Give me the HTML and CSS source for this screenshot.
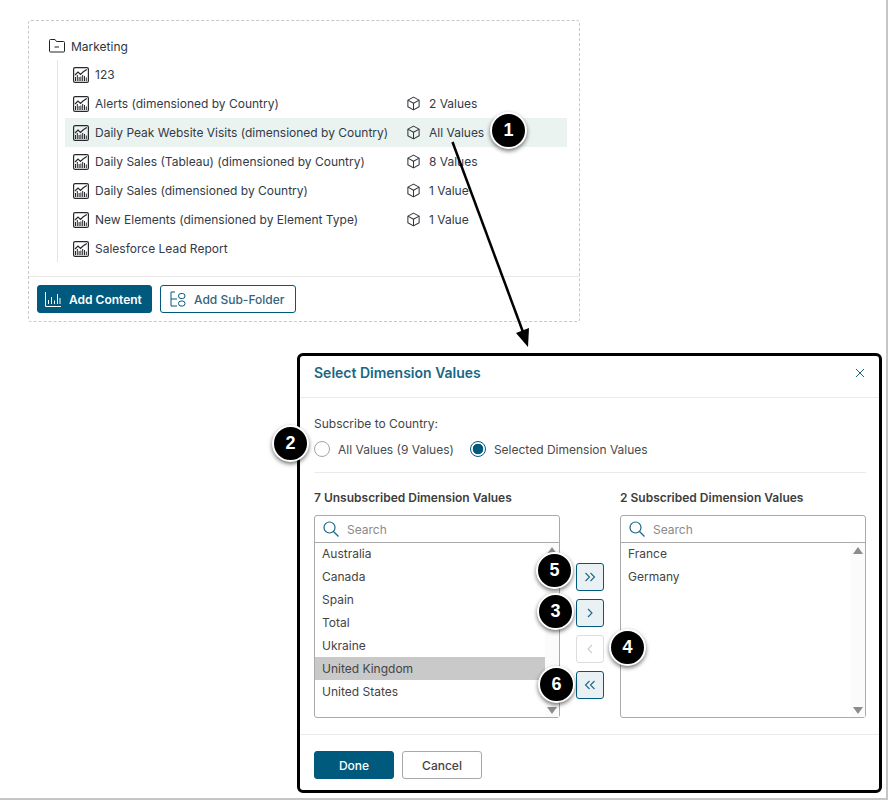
FILE: index.html
```html
<!DOCTYPE html>
<html lang="en">
<head>
<meta charset="utf-8">
<title>Select Dimension Values</title>
<link rel="stylesheet" href="styles.css">
</head>
<body>
<svg width="0" height="0" class="defs">
  <symbol id="chart" viewBox="0 0 16 16">
    <rect x=".6" y=".6" width="14.800" height="14.800" rx="1.500" fill="none" stroke="currentColor" stroke-width="1.200"/>
    <path d="M2 8 5 5 7.500 7.500 10 5 13.800 2.600" fill="none" stroke="currentColor" stroke-width="1.200"/>
    <path d="M2.500 14V10M4.300 14V8M6.100 14V10M7.900 14V9.500M9.700 14V8M11.500 14V9M13.300 14V10.500" fill="none" stroke="currentColor" stroke-width="1"/>
  </symbol>
  <symbol id="cube" viewBox="0 0 16 16">
    <path d="M8 1.200 14 4.400V11.400L8 14.800 2 11.400V4.400ZM2 4.400 8 7.800 14 4.400M8 7.800V14.800" fill="none" stroke="currentColor" stroke-width="1.100" stroke-linejoin="round"/>
  </symbol>
</svg>

<main class="frame">
  <section class="card">
    <div class="tree">
      <div class="folder">
        <svg class="folder-icon" viewBox="0 0 16 14" width="16" height="14"><path d="M.5 12V1.500a1 1 0 0 1 1-1H6L7.500 2.500H14.500a1 1 0 0 1 1 1V12a1 1 0 0 1-1 1H1.500a1 1 0 0 1-1-1ZM5.500 8H10" fill="none" stroke="currentColor"/></svg>
        <span>Marketing</span>
      </div>
      <ul class="items">
        <li class="item"><span class="name"><svg class="ic16"><use href="#chart"/></svg>123</span></li>
        <li class="item"><span class="name"><svg class="ic16"><use href="#chart"/></svg>Alerts (dimensioned by Country)</span><span class="val"><svg class="ic15"><use href="#cube"/></svg>2 Values</span></li>
        <li class="item active"><span class="name"><svg class="ic16"><use href="#chart"/></svg>Daily Peak Website Visits (dimensioned by Country)</span><span class="val"><svg class="ic15"><use href="#cube"/></svg>All Values</span></li>
        <li class="item"><span class="name"><svg class="ic16"><use href="#chart"/></svg>Daily Sales (Tableau) (dimensioned by Country)</span><span class="val"><svg class="ic15"><use href="#cube"/></svg>8 Values</span></li>
        <li class="item"><span class="name"><svg class="ic16"><use href="#chart"/></svg>Daily Sales (dimensioned by Country)</span><span class="val"><svg class="ic15"><use href="#cube"/></svg>1 Value</span></li>
        <li class="item"><span class="name"><svg class="ic16"><use href="#chart"/></svg>New Elements (dimensioned by Element Type)</span><span class="val"><svg class="ic15"><use href="#cube"/></svg>1 Value</span></li>
        <li class="item"><span class="name"><svg class="ic16"><use href="#chart"/></svg>Salesforce Lead Report</span></li>
      </ul>
    </div>
    <div class="card-foot">
      <button class="btn primary add-content">
        <svg viewBox="0 0 16 16" width="16" height="16"><path d="M.5 1V15.500H16M3.500 13V9M6.500 13V6M9.500 13V9.500M12.500 13V3M15 13V7" fill="none" stroke="currentColor"/></svg>
        Add Content
      </button>
      <button class="btn outline add-sub">
        <svg viewBox="0 0 16 16" width="16" height="16"><path d="M5 1H1V15H7M1 8H7" fill="none" stroke="currentColor"/><rect x="8.500" y="2.500" width="6.500" height="5" rx="2.500" fill="none" stroke="currentColor"/><rect x="8.500" y="10" width="6.500" height="5" rx="2.500" fill="none" stroke="currentColor"/></svg>
        Add Sub-Folder
      </button>
    </div>
  </section>

  <section class="dialog">
    <header class="dlg-head">
      <h2>Select Dimension Values</h2>
      <svg class="close" viewBox="0 0 10 10" width="10" height="10"><path d="M1 1 9 9M9 1 1 9" fill="none" stroke="currentColor" stroke-width="1"/></svg>
    </header>
    <div class="dlg-body">
      <div class="subscribe">
        <p class="sub-label">Subscribe to Country:</p>
        <div class="radios">
          <label class="radio"><span class="dot"></span>All Values (9 Values)</label>
          <label class="radio"><span class="dot on"></span>Selected Dimension Values</label>
        </div>
      </div>
      <div class="picker">
        <div class="col">
          <h3>7 Unsubscribed Dimension Values</h3>
          <div class="box">
            <div class="search">
              <svg viewBox="0 0 16 16" width="16" height="16"><circle cx="6.500" cy="6.500" r="5.500" fill="none" stroke="currentColor" stroke-width="1.200"/><path d="M10.500 10.500 15.500 15.500" stroke="currentColor" stroke-width="1.200"/></svg>
              <span>Search</span>
            </div>
            <div class="list">
              <ul class="opts">
                <li>Australia</li><li>Canada</li><li>Spain</li><li>Total</li><li>Ukraine</li><li class="sel">United Kingdom</li><li>United States</li>
              </ul>
              <div class="scroll"><i class="up"></i><i class="down"></i></div>
            </div>
          </div>
        </div>
        <div class="moves">
          <button class="mv"><svg viewBox="0 0 12 10" width="12" height="10"><path d="M1.500 1 5.500 5 1.500 9M6.500 1 10.500 5 6.500 9" fill="none" stroke="currentColor" stroke-width="1.100"/></svg></button>
          <button class="mv"><svg viewBox="0 0 12 10" width="12" height="10"><path d="M4 1 8 5 4 9" fill="none" stroke="currentColor" stroke-width="1.100"/></svg></button>
          <button class="mv off"><svg viewBox="0 0 12 10" width="12" height="10"><path d="M8 1 4 5 8 9" fill="none" stroke="currentColor" stroke-width="1.100"/></svg></button>
          <button class="mv"><svg viewBox="0 0 12 10" width="12" height="10"><path d="M5.500 1 1.500 5 5.500 9M10.500 1 6.500 5 10.500 9" fill="none" stroke="currentColor" stroke-width="1.100"/></svg></button>
        </div>
        <div class="col">
          <h3>2 Subscribed Dimension Values</h3>
          <div class="box">
            <div class="search">
              <svg viewBox="0 0 16 16" width="16" height="16"><circle cx="6.500" cy="6.500" r="5.500" fill="none" stroke="currentColor" stroke-width="1.200"/><path d="M10.500 10.500 15.500 15.500" stroke="currentColor" stroke-width="1.200"/></svg>
              <span>Search</span>
            </div>
            <div class="list">
              <ul class="opts"><li>France</li><li>Germany</li></ul>
              <div class="scroll"><i class="up"></i><i class="down"></i></div>
            </div>
          </div>
        </div>
      </div>
    </div>
    <footer class="dlg-foot">
      <button class="btn primary done">Done</button>
      <button class="btn ghost cancel">Cancel</button>
    </footer>
  </section>

  <svg class="arrow" viewBox="0 0 888 801" width="888" height="801">
    <path d="M452.500 142 523 332" stroke="#000" stroke-width="2.500" fill="none"/>
    <path d="M528 347 516 333 529 328Z" fill="#000"/>
  </svg>
  <span class="badge b1">1</span>
  <span class="badge b2">2</span>
  <span class="badge b5">5</span>
  <span class="badge b3">3</span>
  <span class="badge b4">4</span>
  <span class="badge b6">6</span>
</main>
</body>
</html>
```
FILE: styles.css
```css
* { box-sizing: border-box; }
html, body { margin: 0; padding: 0; background: #fff; }
body { font-family: Inter, "Liberation Sans", sans-serif; font-size: 12px; color: #3f4650; }
.defs { position: absolute; }
ul { list-style: none; margin: 0; padding: 0; }
h2, h3, p { margin: 0; }
button { font-family: inherit; cursor: pointer; }

.frame {
  position: relative;
  width: 888px;
  height: 800px;
  border-right: 2px solid #c6c6c6;
  border-bottom: 2px solid #c6c6c6;
  padding: 20px 0 0 28px;
  overflow: hidden;
}

.card { width: 552px; height: 302px; border: 1px dashed #c8c8c8; border-radius: 3px; display: flex; flex-direction: column; }
.tree { flex: 1; padding: 11px 12px 0 20px; }
.folder { height: 28px; display: flex; align-items: center; gap: 6px; color: #2e3440; padding-bottom: 0; margin-bottom: 1px; }
.folder-icon { color: #222; flex: none; }
.items { margin-left: 8px; padding: 0 0 0 7px; border-left: 1px solid #e4e4e4; height: 202px; margin-top: -1px; }
.item { height: 29px; display: flex; align-items: center; padding-left: 8px; color: #343a46; }
.item.active { background: #eaf3f0; }
.name { width: 333px; display: flex; align-items: center; gap: 6px; white-space: nowrap; }
.val { display: flex; align-items: center; gap: 8px; }
.ic16 { width: 16px; height: 16px; color: #26282c; flex: none; }
.ic15 { width: 15px; height: 15px; color: #33373d; flex: none; }

.card-foot { height: 45px; border-top: 1px solid #e8e8e8; padding: 8px 0 0 8px; display: flex; gap: 8px; }
.btn { height: 28px; border-radius: 3px; font-size: 12px; display: flex; align-items: center; justify-content: center; padding: 0; }
.primary { background: #005a7d; border: 1px solid #005a7d; color: #fff; font-weight: 600; }
.outline { background: #fff; border: 1px solid #005a7d; color: #36627a; font-weight: 500; }
.ghost { background: #fff; border: 1px solid #a8a8a8; color: #444; }
.add-content { width: 115px; gap: 8px; justify-content: flex-start; padding-left: 7px; }
.add-sub { width: 136px; gap: 8px; justify-content: flex-start; padding-left: 9px; }
.add-sub svg { color: #005a7d; }

.dialog {
  width: 585px;
  height: 440px;
  margin: 31px 0 0 269px;
  border: 3px solid #000;
  border-radius: 6px;
  background: #fff;
  display: flex;
  flex-direction: column;
}
.dlg-head { height: 42px; flex: none; border-bottom: 1px solid #eaeaea; padding: 0 14px 8px 14px; display: flex; align-items: center; justify-content: space-between; }
.dlg-head h2 { font-size: 14px; font-weight: 600; color: #1a6685; }
.close { color: #1a6685; }
.dlg-body { flex: 1; padding: 0 13px 0 14px; }
.subscribe { height: 75px; border-bottom: 1px solid #eaeaea; padding-top: 18px; }
.sub-label { line-height: 16px; color: #444; }
.radios { display: flex; gap: 16px; margin-top: 8px; height: 18px; align-items: center; }
.radio { display: flex; align-items: center; gap: 8px; color: #4a4a4a; }
.dot { width: 16px; height: 16px; border-radius: 50%; border: 1px solid #a5a5a5; background: #fff; flex: none; }
.dot.on { border-color: #005a7d; background: radial-gradient(circle, #005a7d 0 5px, #fff 5.6px); }

.picker { display: flex; margin-top: 17px; }
.col { width: 246px; flex: none; }
.col h3 { font-size: 12px; font-weight: 600; color: #3d3d3d; line-height: 16px; margin-bottom: 9px; }
.box { height: 203px; border: 1px solid #aaa; border-radius: 3px; display: flex; flex-direction: column; }
.search { height: 27px; flex: none; border-bottom: 1px solid #aaa; display: flex; align-items: center; gap: 8px; padding-left: 8px; color: #8a8a8a; }
.search svg { color: #1a6685; }
.list { flex: 1; display: flex; min-height: 0; }
.opts { flex: 1; margin-top: -1px; }
.opts li { height: 23px; padding-left: 7px; line-height: 23px; color: #444; }
.opts li.sel { background: #c9c9c9; }
.scroll { width: 14px; flex: none; background: #fbfbfb; display: flex; flex-direction: column; justify-content: space-between; align-items: center; padding: 4px 0 3px; }
.scroll i { width: 0; height: 0; border-left: 5px solid transparent; border-right: 5px solid transparent; }
.scroll .up { border-bottom: 7px solid #8c8c8c; }
.scroll .down { border-top: 7px solid #8c8c8c; }

.moves { flex: 1; display: flex; flex-direction: column; align-items: center; gap: 8px; padding-top: 73px; }
.mv { width: 28px; height: 28px; padding: 0; border: 1px solid #005a7d; border-radius: 3px; background: #eaf1f5; color: #1a6685; display: flex; align-items: center; justify-content: center; }
.mv.off { background: #fff; border-color: #ddd; color: #ccc; }

.dlg-foot { height: 56px; flex: none; border-top: 1px solid #eaeaea; padding: 16px 0 0 14px; display: flex; gap: 8px; }
.done, .cancel { width: 80px; font-weight: 500; }

.arrow { position: absolute; left: 0; top: 0; pointer-events: none; }
.badge {
  position: absolute;
  width: 37px;
  height: 37px;
  border-radius: 50%;
  background: #000;
  border: 2px solid #fff;
  box-shadow: 0 2px 4px rgba(0,0,0,.55);
  color: #fff;
  font-family: "Liberation Sans", sans-serif;
  font-size: 18px;
  font-weight: 700;
  display: flex;
  align-items: center;
  justify-content: center;
}
.b1 { left: 490px; top: 112px; }
.b2 { left: 272px; top: 425px; }
.b5 { left: 536px; top: 552px; }
.b3 { left: 537px; top: 593px; }
.b4 { left: 609px; top: 629px; }
.b6 { left: 538px; top: 666px; }
```
